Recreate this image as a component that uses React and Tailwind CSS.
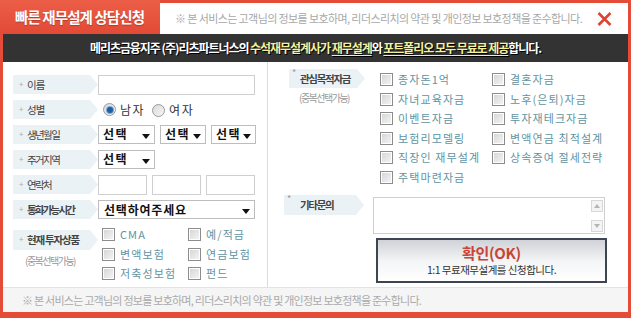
import React from "react";

const F = { fontFamily: '"Noto Sans CJK KR", "Noto Sans", sans-serif' };

function Cb() {
  return (
    <span className="inline-block w-[13px] h-[13px] shrink-0 border border-[#8c8c8c] bg-linear-to-br from-[#d4d4d4] to-[#f6f6f6] shadow-[inset_0_0_0_1px_#ffffff]" />
  );
}

function Arrow() {
  return (
    <svg width="8" height="5" viewBox="0 0 8 5" className="shrink-0">
      <path d="M0 0 L8 0 L4 5 Z" fill="#111" />
    </svg>
  );
}

function Sel({ className, text }) {
  return (
    <div className={"flex items-end justify-between border border-[#bdbdbd] h-[19px] pl-[4px] pr-[4px] pb-[4px] bg-white " + className}>
      <span className="text-[12px] font-bold leading-[12px] tracking-[1.5px] text-[#111] self-start pt-[2px]">{text}</span>
      <Arrow />
    </div>
  );
}

function Tab({ children, className, star }) {
  return (
    <div
      className={
        "relative flex items-center h-[19px] bg-[#ebf2f5] [clip-path:polygon(0_0,calc(100%-8px)_0,100%_50%,calc(100%-8px)_100%,0_100%)] " +
        className
      }
    >
      {star ? (
        <span className="absolute left-[3px] top-[-1px] text-[9px] text-[#999] leading-[10px]">*</span>
      ) : (
        <span className="absolute left-[6px] top-[4px] text-[8px] text-[#aaa] leading-[10px]">+</span>
      )}
      {children}
    </div>
  );
}

function Radio({ checked }) {
  return (
    <span className="inline-flex items-center justify-center w-[13px] h-[13px] rounded-full border border-[#9a9a9a] bg-linear-to-br from-[#d9d9d9] to-[#f7f7f7]">
      {checked && <span className="w-[6px] h-[6px] rounded-full bg-[#1f5fa8] shadow-[0_0_0_1px_#7fa7d4]" />}
    </span>
  );
}

function CItem({ label }) {
  return (
    <div className="flex items-center gap-[5px] h-[19.5px]">
      <Cb />
      <span className="text-[11px] tracking-[1.1px] text-[#5f949f] leading-none whitespace-nowrap">{label}</span>
    </div>
  );
}

export default function App() {
  const interests = [
    "종자돈1억", "결혼자금",
    "자녀교육자금", "노후(은퇴)자금",
    "이벤트자금", "투자재테크자금",
    "보험리모델링", "변액연금 최적설계",
    "직장인 재무설계", "상속증여 절세전략",
    "주택마련자금",
  ];
  return (
    <div style={F} className="w-[631px] h-[318px] bg-[#e44c38] flex flex-col px-[3px] pb-[6px] overflow-hidden">
      {/* header */}
      <div className="flex h-[34px] shrink-0">
        <div className="flex items-center bg-linear-to-b from-[#ec5e47] to-[#e24a36] -ml-[3px] pl-[15px] w-[160px]">
          <span className="text-white font-bold text-[14.5px] tracking-[-0.9px] [text-shadow:0_1px_1px_rgba(0,0,0,0.25)]">빠른 재무설계 상담신청</span>
        </div>
        <div className="flex-1 mt-[3px] bg-white flex items-center pl-[15px] pr-[15px] justify-between">
          <span className="text-[11px] tracking-[-0.6px] text-[#a8a8a8] whitespace-nowrap">
            ※ 본 서비스는 고객님의 정보를 보호하며, 리더스리치의 약관 및 개인정보 보호정책을 준수합니다.
          </span>
          <svg width="15" height="14" viewBox="0 0 15 14" className="mr-[1px]">
            <path d="M1.5 1 L13.5 13 M13.5 1 L1.5 13" stroke="#dd4433" strokeWidth="2.6" />
          </svg>
        </div>
      </div>
      {/* dark bar */}
      <div className="h-[28px] shrink-0 bg-[#333333] flex items-center justify-center">
        <span className="text-white font-bold text-[12px] tracking-[-1.05px] whitespace-nowrap [text-shadow:1px_1px_0_#000]">
          메리츠금융지주 (주)리츠파트너스의{" "}
          <span className="text-[#f5f19c]">수석재무설계사가</span>{" "}
          <span className="text-[#f5f19c] underline decoration-1 underline-offset-2">재무설계</span>와{" "}
          <span className="text-[#f5f19c] underline decoration-1 underline-offset-2">포트폴리오 모두 무료로 제공</span>합니다.
        </span>
      </div>
      {/* body */}
      <div className="h-[225px] shrink-0 bg-white flex">
        {/* left */}
        <div className="w-[265px] border-r border-[#dcdcdc] pl-[10px] pt-[13px] flex flex-col">
          <div className="flex flex-col gap-[6px]">
            <div className="flex items-center h-[19px]">
              <Tab className="w-[85px] pl-[14px]"><span className="text-[10.5px] tracking-[-1px] text-[#444]">이름</span></Tab>
              <div className="w-[157px] h-[20px] border border-[#cfcfcf] bg-white" />
            </div>
            <div className="flex items-center h-[19px]">
              <Tab className="w-[85px] pl-[14px]"><span className="text-[10.5px] tracking-[-1px] text-[#444]">성별</span></Tab>
              <div className="flex items-center ml-[5px]">
                <Radio checked />
                <span className="ml-[4px] text-[12px] tracking-[1.5px] text-[#333]">남자</span>
                <span className="ml-[7px]"><Radio /></span>
                <span className="ml-[4px] text-[12px] tracking-[1.5px] text-[#333]">여자</span>
              </div>
            </div>
            <div className="flex items-center h-[19px]">
              <Tab className="w-[85px] pl-[14px]"><span className="text-[10.5px] tracking-[-1.6px] text-[#444]">생년월일</span></Tab>
              <div className="flex gap-[5px]">
                <Sel className="w-[57px]" text="선택" />
                <Sel className="w-[46px]" text="선택" />
                <Sel className="w-[45px]" text="선택" />
              </div>
            </div>
            <div className="flex items-center h-[19px]">
              <Tab className="w-[85px] pl-[14px]"><span className="text-[10.5px] tracking-[-1.6px] text-[#444]">주거지역</span></Tab>
              <Sel className="w-[57px]" text="선택" />
            </div>
            <div className="flex items-center h-[19px]">
              <Tab className="w-[85px] pl-[14px]"><span className="text-[10.5px] tracking-[-1.6px] text-[#444]">연락처</span></Tab>
              <div className="flex gap-[5px]">
                <div className="w-[49px] h-[20px] border border-[#cfcfcf]" />
                <div className="w-[49px] h-[20px] border border-[#cfcfcf]" />
                <div className="w-[49px] h-[20px] border border-[#cfcfcf]" />
              </div>
            </div>
            <div className="flex items-center h-[19px]">
              <Tab className="w-[85px] pl-[14px]"><span className="text-[10.5px] font-bold tracking-[-1.8px] text-[#444]">통화가능시간</span></Tab>
              <div className="w-[157px] flex items-center justify-between border border-[#bdbdbd] h-[19px] pl-[5px] pr-[4px]">
                <span className="text-[12px] font-bold tracking-[0.8px] text-[#111] leading-none">선택하여주세요</span>
                <span className="pt-[4px]"><Arrow /></span>
              </div>
            </div>
          </div>
          <div className="flex mt-[6px]">
            <div className="w-[85px] flex flex-col pt-[5px]">
              <Tab className="w-[85px] pl-[14px] h-[20px]"><span className="text-[10.5px] font-bold tracking-[-1.2px] text-[#444]">현재 투자상품</span></Tab>
              <span className="mt-[3px] pl-[12px] text-[10px] tracking-[-1.5px] text-[#999]">(중복선택가능)</span>
            </div>
            <div className="grid grid-cols-[86px_1fr] ml-[4px]">
              <CItem label="CMA" />
              <CItem label="예/적금" />
              <CItem label="변액보험" />
              <CItem label="연금보험" />
              <CItem label="저축성보험" />
              <CItem label="펀드" />
            </div>
          </div>
        </div>
        {/* right */}
        <div className="flex-1 flex flex-col pt-[7px] pl-[21px]">
          <div className="flex">
            <div className="w-[91px] flex flex-col">
              <Tab star className="w-[76px] pl-[11px] h-[18px]"><span className="text-[10.5px] font-bold tracking-[-1.3px] text-[#444]">관심목적자금</span></Tab>
              <span className="mt-[2px] pl-[10px] text-[10px] tracking-[-1.5px] text-[#999]">(중복선택가능)</span>
            </div>
            <div className="grid grid-cols-[112px_1fr] pt-[1px]">
              {interests.map((t) => (
                <CItem key={t} label={t} />
              ))}
            </div>
          </div>
          <div className="flex mt-[8px]">
            <div className="w-[89px] -ml-[5px]">
              <Tab star className="w-[80px] pl-[16px] h-[20px]"><span className="text-[10.5px] font-bold tracking-[-1.3px] text-[#444]">기타문의</span></Tab>
            </div>
            <div className="flex flex-col pt-[2px]">
              <div className="w-[232px] h-[37px] border border-[#cfcfcf] flex justify-end pr-[1px] pt-[2px]">
                <div className="flex flex-col justify-between pb-[1px]">
                  <div className="w-[12px] h-[12px] border border-[#d8d8d8] bg-[#f4f4f4] flex items-center justify-center">
                    <svg width="6" height="4" viewBox="0 0 6 4"><path d="M0 4 L3 0 L6 4 Z" fill="#b5b5b5" /></svg>
                  </div>
                  <div className="w-[12px] h-[12px] border border-[#d8d8d8] bg-[#f4f4f4] flex items-center justify-center">
                    <svg width="6" height="4" viewBox="0 0 6 4"><path d="M0 0 L6 0 L3 4 Z" fill="#b5b5b5" /></svg>
                  </div>
                </div>
              </div>
              <div className="mt-[4px] ml-[3px] w-[231px] h-[45px] border-[2px] border-[#3d4550] bg-linear-to-b from-[#cfd2d7] via-[#f3f4f5] via-50% to-white flex flex-col items-center pt-[4px]">
                <span className="text-[15px] font-bold text-[#c94436] leading-[18px] tracking-[-0.3px]">확인(OK)</span>
                <span className="text-[10.5px] text-[#333] tracking-[-0.5px] leading-[15px]">1:1 무료재무설계를 신청합니다.</span>
              </div>
            </div>
          </div>
        </div>
      </div>
      {/* footer */}
      <div className="h-[25px] shrink-0 bg-[#f5f5f5] border-t border-[#e3e3e3] flex items-center pl-[19px]">
        <span className="text-[11px] tracking-[-0.75px] text-[#aaaaaa] whitespace-nowrap">
          ※ 본 서비스는 고객님의 정보를 보호하며, 리더스리치의 약관 및 개인정보 보호정책을 준수합니다.
        </span>
      </div>
    </div>
  );
}
